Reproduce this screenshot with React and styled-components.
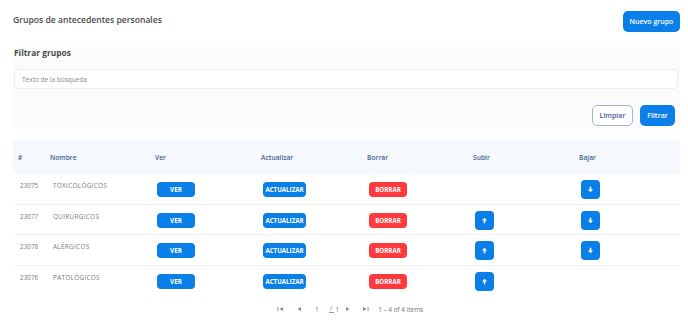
import React from "react";
import styled, { createGlobalStyle } from "styled-components";

const GlobalStyle = createGlobalStyle`
  html, body {
    margin: 0;
    padding: 0;
    background: #ffffff;
    font-family: "Open Sans", "Liberation Sans", sans-serif;
  }
`;

const blue = "#0a7fe8";
const red = "#fd3a3d";
const headText = "#47628c";

const Page = styled.div`
  width: 688px;
  box-sizing: border-box;
  padding: 11px 8px 0 13px;
`;

const TopBar = styled.div`
  display: flex;
  align-items: center;
  justify-content: space-between;
  height: 21px;
`;

const Title = styled.h1`
  margin: 0 0 3px 0;
  font-size: 8.6px;
  font-weight: 600;
  color: #4a4a4a;
`;

const Button = styled.button`
  box-sizing: border-box;
  height: ${({ h }) => h || 21}px;
  padding: 0 ${({ px }) => (px === undefined ? 4 : px)}px;
  border-radius: ${({ r }) => r || 5}px;
  border: 1px solid ${({ variant }) => (variant === "outline" ? "#a3b5cc" : "transparent")};
  background: ${({ variant }) =>
    variant === "outline" ? "#ffffff" : variant === "danger" ? red : blue};
  color: ${({ variant }) => (variant === "outline" ? headText : "#ffffff")};
  font-family: inherit;
  font-size: ${({ fs }) => fs || 7}px;
  font-weight: ${({ fw }) => fw || 600};
  white-space: nowrap;
  display: inline-flex;
  align-items: center;
  justify-content: center;
  width: ${({ w }) => (w ? `${w}px` : "auto")};
  cursor: pointer;
`;

const FilterPanel = styled.section`
  margin-top: 15px;
  background: #fbfbfb;
  padding: 1px 2px 3px 1px;
`;

const PanelTitle = styled.h2`
  margin: 0;
  font-size: 8.4px;
  font-weight: 700;
  color: #4a4a4a;
  line-height: 10px;
`;

const SearchInput = styled.input`
  display: block;
  box-sizing: border-box;
  width: 100%;
  height: 20px;
  margin-top: 11px;
  border: 1px solid #ececec;
  border-radius: 4px;
  background: #ffffff;
  padding: 0 7px;
  font-family: inherit;
  font-size: 6.5px;
  outline: none;
  &::placeholder {
    color: #8a8a8a;
  }
`;

const Actions = styled.div`
  display: flex;
  justify-content: flex-end;
  gap: 7px;
  margin-top: 16px;
  padding-right: 3px;
`;

const Table = styled.div`
  margin-top: 11px;
`;

const cols = "32px 105px repeat(5, 106px)";

const HeadRow = styled.div`
  display: grid;
  grid-template-columns: ${cols};
  height: 34px;
  align-items: center;
  background: #f5f8fd;
`;

const HeadCell = styled.div`
  padding-left: 5px;
  font-size: 6.7px;
  font-weight: 600;
  color: ${headText};
`;

const Row = styled.div`
  display: grid;
  grid-template-columns: ${cols};
  height: 30.5px;
  box-sizing: border-box;
  border-bottom: ${({ last }) => (last ? "none" : "1px solid #f3f3f3")};
`;

const Cell = styled.div`
  padding-left: ${({ pl }) => pl || 7}px;
  padding-top: ${({ pt }) => (pt === undefined ? 8 : pt)}px;
  font-size: 6.4px;
  line-height: 8px;
  color: #7a7a7a;
  letter-spacing: ${({ ls }) => ls || 0}px;
`;

const IconButton = styled.button`
  width: 19px;
  height: 19px;
  border: none;
  border-radius: 4px;
  background: ${blue};
  display: flex;
  align-items: center;
  justify-content: center;
  padding: 0;
  cursor: pointer;
`;

const Pager = styled.div`
  display: flex;
  align-items: center;
  justify-content: center;
  height: 26px;
  padding-left: 2px;
  font-size: 6.4px;
  color: #777;
`;

const PagerIcon = styled.span`
  display: inline-flex;
  align-items: center;
  margin: 0 ${({ m }) => m || 5}px;
`;

const PageNum = styled.span`
  margin: 0 5px 0 7px;
`;

const PageInput = styled.span`
  display: inline-block;
  border-bottom: 1px solid #999;
  width: 5px;
  text-align: center;
  margin: 0 2px 0 5px;
  line-height: 7px;
`;

const Summary = styled.span`
  margin-left: 5px;
  color: #6f6f6f;
`;

const Arrow = ({ dir }) => (
  <svg width="7" height="7" viewBox="0 0 7 7">
    {dir === "up" ? (
      <path d="M3.5 0.8 L6.1 3.4 H4.3 V6.2 H2.7 V3.4 H0.9 Z" fill="#fff" />
    ) : (
      <path d="M3.5 6.2 L6.1 3.6 H4.3 V0.8 H2.7 V3.6 H0.9 Z" fill="#fff" />
    )}
  </svg>
);

const Tri = ({ dir, bar }) => (
  <svg width="7" height="6" viewBox="0 0 7 6">
    {dir === "left" ? (
      <>
        {bar && <rect x="0.5" y="0.8" width="0.9" height="4.4" fill="#8a8a8a" />}
        <path d="M2.5 3 L6 1 V5 Z" fill="#8a8a8a" />
      </>
    ) : (
      <>
        <path d="M1 1 L4.5 3 L1 5 Z" fill="#8a8a8a" />
        {bar && <rect x="5.6" y="0.8" width="0.9" height="4.4" fill="#8a8a8a" />}
      </>
    )}
  </svg>
);

const rows = [
  { id: 23075, name: "TOXICOLÓGICOS", up: false, down: true },
  { id: 23077, name: "QUIRÚRGICOS", up: true, down: true },
  { id: 23078, name: "ALÉRGICOS", up: true, down: true },
  { id: 23076, name: "PATOLÓGICOS", up: true, down: false },
];

const headers = ["#", "Nombre", "Ver", "Actualizar", "Borrar", "Subir", "Bajar"];

export default function App() {
  return (
    <Page>
      <GlobalStyle />
      <TopBar>
        <Title>Grupos de antecedentes personales</Title>
        <Button w={57} px={2}>Nuevo grupo</Button>
      </TopBar>

      <FilterPanel>
        <PanelTitle>Filtrar grupos</PanelTitle>
        <SearchInput placeholder="Texto de la búsqueda" />
        <Actions>
          <Button variant="outline" w={41}>Limpiar</Button>
          <Button w={35}>Filtrar</Button>
        </Actions>
      </FilterPanel>

      <Table>
        <HeadRow>
          {headers.map((h) => (
            <HeadCell key={h}>{h}</HeadCell>
          ))}
        </HeadRow>
        {rows.map((r, i) => (
          <Row key={r.id} last={i === rows.length - 1}>
            <Cell>{r.id}</Cell>
            <Cell pl={8} ls={0.3}>{r.name}</Cell>
            <Cell>
              <Button h={15} w={38} r={4} fs={6.3} fw={700}>VER</Button>
            </Cell>
            <Cell>
              <Button h={15} w={43} r={4} fs={6.2} fw={700} px={1}>ACTUALIZAR</Button>
            </Cell>
            <Cell>
              <Button variant="danger" h={15} w={38} r={4} fs={6.2} fw={700}>BORRAR</Button>
            </Cell>
            <Cell pt={6}>
              {r.up && (
                <IconButton aria-label="Subir">
                  <Arrow dir="up" />
                </IconButton>
              )}
            </Cell>
            <Cell pt={6}>
              {r.down && (
                <IconButton aria-label="Bajar">
                  <Arrow dir="down" />
                </IconButton>
              )}
            </Cell>
          </Row>
        ))}
      </Table>

      <Pager>
        <PagerIcon>
          <Tri dir="left" bar />
        </PagerIcon>
        <PagerIcon m={6}>
          <Tri dir="left" />
        </PagerIcon>
        <PageNum>1</PageNum>
        <PageInput>/</PageInput>
        <span>1</span>
        <PagerIcon m={6}>
          <Tri dir="right" />
        </PagerIcon>
        <PagerIcon m={4}>
          <Tri dir="right" bar />
        </PagerIcon>
        <Summary>1 – 4 of 4 items</Summary>
      </Pager>
    </Page>
  );
}
